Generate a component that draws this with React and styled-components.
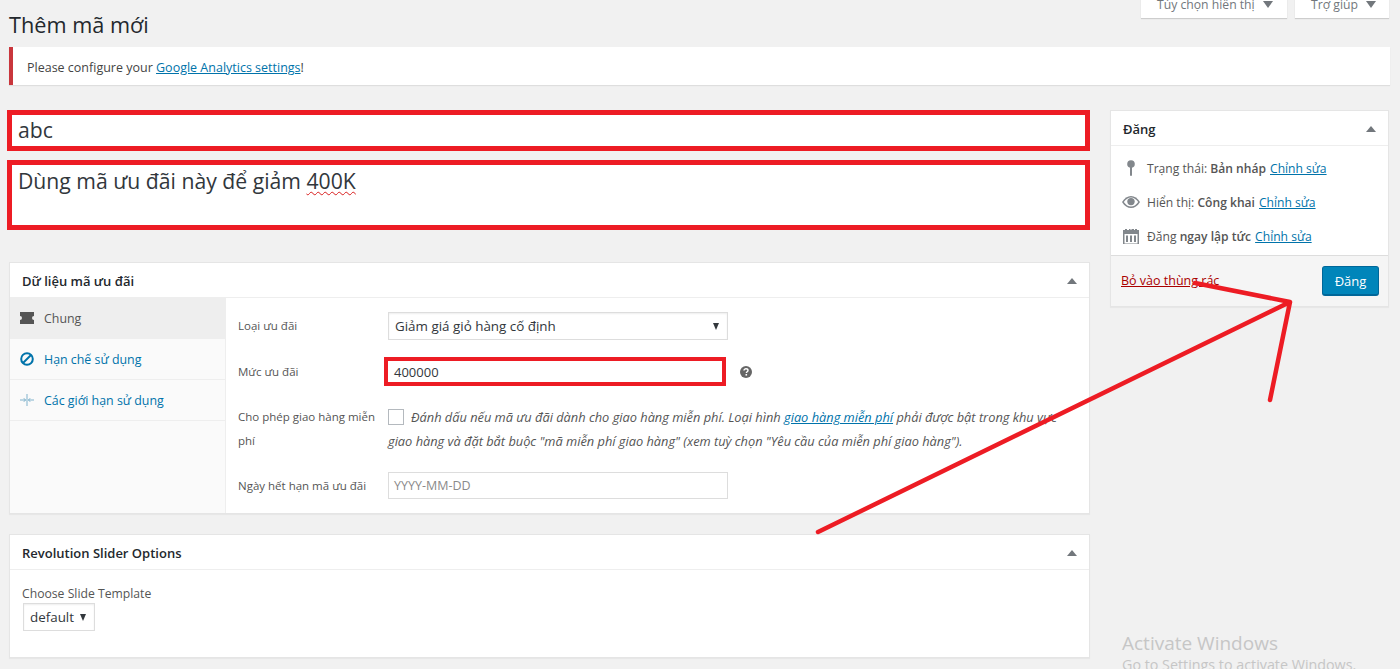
import React from 'react'
import styled, { createGlobalStyle } from 'styled-components'

const GlobalStyle = createGlobalStyle`
  html, body { margin: 0; padding: 0; height: 100%; background: #f1f1f1; }
  body { font-family: "Open Sans", "Liberation Sans", sans-serif; font-size: 13px; color: #444; }
  * { box-sizing: border-box; }
  a { color: #0073aa; }
`

const TriangleDown = () => (
  <svg width="10" height="7" viewBox="0 0 10 7"><path d="M0 0h10L5 7z" fill="#72777c" /></svg>
)

const TriangleUp = () => (
  <svg width="10" height="6" viewBox="0 0 10 6"><path d="M5 0l5 6H0z" fill="#72777c" /></svg>
)

const SelectArrow = () => (
  <svg width="6" height="7" viewBox="0 0 6 7"><path d="M0 0h6L3 7z" fill="#32373c" /></svg>
)

const PinIcon = () => (
  <svg width="14" height="16" viewBox="0 0 14 16">
    <circle cx="7" cy="4" r="3.800" fill="#82878c" />
    <rect x="6" y="6" width="2" height="10" rx="1" fill="#82878c" />
  </svg>
)

const EyeIcon = () => (
  <svg width="18" height="12" viewBox="0 0 18 12">
    <path d="M0 6C2.500 2 5.500 0 9 0s6.500 2 9 6c-2.500 4-5.500 6-9 6S2.500 10 0 6z" fill="#82878c" />
    <path d="M1.800 6C4 3 6.300 1.500 9 1.500S14 3 16.200 6C14 9 11.700 10.500 9 10.500S4 9 1.800 6z" fill="#fff" />
    <circle cx="9" cy="5.600" r="3.700" fill="#82878c" />
  </svg>
)

const CalendarIcon = () => (
  <svg width="16" height="16" viewBox="0 0 16 16" fill="#82878c">
    <path d="M0 2h2V1h2v1h2V1h1.500v1h1V1H11v1h1V1h2v1h2v15H0zM1.500 6v9.500h13V6z" />
    <path d="M3 7.500h2v6.500H3zM7 7.500h2v6.500H7zM11 7.500h2v6.500h-2z" />
  </svg>
)

const TicketIcon = () => (
  <svg width="14" height="12" viewBox="0 0 14 12">
    <path d="M0 0h14v4a2 2 0 0 0 0 4v4H0V8a2 2 0 0 0 0-4z" fill="#555" />
  </svg>
)

const BanIcon = () => (
  <svg width="14" height="14" viewBox="0 0 14 14" fill="none" stroke="#0073aa" strokeWidth="2">
    <circle cx="7" cy="7" r="5.800" />
    <path d="M3 11L11 3" />
  </svg>
)

const LimitIcon = () => (
  <svg width="14" height="14" viewBox="0 0 14 14" fill="none" stroke="#4a93b8" strokeWidth="0.700">
    <path d="M7 1v12M0 7h5.500M14 7H8.500M3.800 5.200L5.600 7 3.800 8.800M10.200 5.200L8.400 7l1.800 1.800" />
  </svg>
)

const HelpIcon = () => (
  <svg width="12" height="12" viewBox="0 0 12 12">
    <circle cx="6" cy="6" r="6" fill="#666" />
    <path d="M4 4.600C4 3.400 5 2.800 6 2.800s2 .6 2 1.700c0 1.300-1.600 1.300-1.600 2.500" fill="none" stroke="#fff" strokeWidth="1.400" />
    <rect x="5.500" y="8" width="1.600" height="1.600" fill="#fff" />
  </svg>
)

const Page = styled.div`
  position: relative;
  height: 669px;
  overflow: hidden;
  padding: 0 10px 0 9px;
`

const TopRow = styled.header`
  display: flex;
  justify-content: space-between;
  height: 47px;
`

const Title = styled.h1`
  margin: 10px 0 0;
  font-size: 21.700px;
  font-weight: 400;
  line-height: 30px;
  color: #23282d;
`

const MetaTabs = styled.div`
  display: flex;
  gap: 8px;
  margin: -10px 1px 0 0;
  height: 28px;
`

const MetaTab = styled.div`
  display: flex;
  align-items: center;
  gap: 8px;
  width: ${p => p.$width}px;
  padding-left: 16px;
  background: #fff;
  font-size: 12.200px;
  color: #72777c;
  box-shadow: 0 1px 1px rgba(0, 0, 0, 0.15);
`

const Notice = styled.div`
  height: 38px;
  display: flex;
  align-items: center;
  padding: 2px 0 0 14px;
  background: #fff;
  border-left: 4px solid #c9363c;
  box-shadow: 0 1px 1px rgba(0, 0, 0, 0.08);
  font-size: 12.500px;
`

const Columns = styled.div`
  display: flex;
  justify-content: space-between;
  align-items: flex-start;
  margin-top: 25px;
`

const MainColumn = styled.main`
  width: 1081px;
`

const TitleInput = styled.div`
  width: 1083px;
  height: 41px;
  margin-left: -2px;
  padding-left: 6px;
  border: 5px solid #ed1c24;
  background: #fff;
  font-size: 21.200px;
  line-height: 30px;
  color: #32373c;
`

const Description = styled(TitleInput)`
  height: 70px;
  margin-top: 9px;
  padding-top: 1px;
`

const Squiggle = styled.span`
  text-decoration: underline wavy #d81e1e 1px;
  text-underline-offset: 2px;
`

const Box = styled.section`
  background: #fff;
  border: 1px solid #e5e5e5;
  box-shadow: 0 1px 1px rgba(0, 0, 0, 0.04);
  margin-top: ${p => p.$top}px;
`

const BoxHeader = styled.div`
  display: flex;
  justify-content: space-between;
  align-items: center;
  height: 35px;
  padding: 1px 12px 0;
  border-bottom: 1px solid #eee;
  font-size: 13px;
  font-weight: 600;
  color: #23282d;
`

const DataBody = styled.div`
  display: flex;
  height: 215px;
`

const TabList = styled.nav`
  width: 216px;
  background: #fafafa;
  border-right: 1px solid #eee;
`

const Tab = styled.div`
  display: flex;
  align-items: center;
  gap: 10px;
  height: 41px;
  padding-left: 10px;
  font-size: 12.400px;
  color: ${p => (p.$active ? '#555' : '#0073aa')};
  background: ${p => (p.$active ? '#eee' : 'transparent')};
  border-bottom: 1px solid #eee;
`

const FormArea = styled.div`
  flex: 1;
  padding: 14px 12px 0 12px;
`

const FormRow = styled.div`
  display: grid;
  grid-template-columns: 150px 1fr;
  align-items: ${p => (p.$top ? 'start' : 'center')};
  margin-bottom: ${p => p.$gap}px;
`

const FieldLabel = styled.label`
  font-size: 11.500px;
  line-height: 24px;
  color: #555;
`

const SelectBox = styled.div`
  display: flex;
  justify-content: space-between;
  align-items: center;
  width: ${p => p.$width || 340}px;
  height: 28px;
  margin-left: ${p => p.$left || 0}px;
  padding: 0 8px 0 6px;
  background: #fff;
  border: 1px solid #ddd;
  box-shadow: inset 0 1px 2px rgba(0, 0, 0, 0.07);
  font-size: 13.400px;
  color: #32373c;
`

const AmountRow = styled.div`
  display: flex;
  align-items: center;
  gap: 14px;
  margin-left: -4px;
`

const AmountInput = styled.div`
  width: 342px;
  height: 29px;
  padding-left: 6px;
  border: 4px solid #ed1c24;
  background: #fff;
  font-size: 13px;
  line-height: 23px;
  color: #32373c;
`

const CheckText = styled.div`
  font-size: 12.800px;
  font-style: italic;
  line-height: 24px;
  color: #555;
`

const Checkbox = styled.span`
  display: inline-block;
  width: 16px;
  height: 16px;
  margin-right: 7px;
  vertical-align: -3px;
  background: #fff;
  border: 1px solid #b4b9be;
`

const DateInput = styled.div`
  width: 340px;
  height: 27px;
  padding-left: 5px;
  border: 1px solid #ddd;
  background: #fff;
  font-size: 12.500px;
  line-height: 25px;
  color: #8a8a8a;
`

const SliderBody = styled.div`
  height: 87px;
  padding: 15px 13px 0 12px;
`

const SliderLabel = styled.div`
  font-size: 12.200px;
  line-height: 18px;
  color: #555;
`

const SideColumn = styled.aside`
  width: 279px;
  margin-right: 1px;
  background: #fff;
  border: 1px solid #e5e5e5;
  box-shadow: 0 1px 1px rgba(0, 0, 0, 0.04);
`

const SideRows = styled.div`
  display: flex;
  flex-direction: column;
  gap: 10px;
  padding: 10px 0 7px 10px;
`

const SideRow = styled.div`
  display: flex;
  align-items: center;
  height: 24px;
  font-size: 12.100px;
  color: #555;
  b { font-weight: 600; }
  a { margin-left: 4px; }
`

const SideIcon = styled.span`
  display: flex;
  justify-content: center;
  width: 20px;
  margin-right: 6px;
`

const SideFooter = styled.div`
  display: flex;
  justify-content: space-between;
  align-items: center;
  height: 51px;
  padding: 0 9px 0 10px;
  background: #f5f5f5;
  border-top: 1px solid #ddd;
  a { color: #a00; font-size: 12.500px; margin-bottom: 2px; }
`

const PublishButton = styled.button`
  width: 57px;
  height: 30px;
  padding: 0;
  background: #0085ba;
  border: 1px solid #006799;
  border-bottom-width: 2px;
  border-radius: 3px;
  font-family: inherit;
  font-size: 13px;
  color: #fff;
`

const Annotations = styled.svg`
  position: absolute;
  inset: 0;
  pointer-events: none;
`

const Watermark = styled.div`
  position: absolute;
  left: 1122px;
  top: 631px;
  color: #c6c6c6;
  font-size: 19px;
  line-height: 24px;
  white-space: nowrap;
  small { display: block; font-size: 14.300px; line-height: 20px; }
`

const App = () => (
  <Page>
    <GlobalStyle />
    <TopRow>
      <Title>Thêm mã mới</Title>
      <MetaTabs>
        <MetaTab $width={146}>Tùy chọn hiển thị <TriangleDown /></MetaTab>
        <MetaTab $width={94}>Trợ giúp <TriangleDown /></MetaTab>
      </MetaTabs>
    </TopRow>

    <Notice>
      <span>Please configure your <a href="#">Google Analytics settings</a>!</span>
    </Notice>

    <Columns>
      <MainColumn>
        <TitleInput>abc</TitleInput>
        <Description>Dùng mã ưu đãi này để giảm <Squiggle>400K</Squiggle></Description>

        <Box $top={32}>
          <BoxHeader>Dữ liệu mã ưu đãi <TriangleUp /></BoxHeader>
          <DataBody>
            <TabList>
              <Tab $active><TicketIcon /> Chung</Tab>
              <Tab><BanIcon /> Hạn chế sử dụng</Tab>
              <Tab><LimitIcon /> Các giới hạn sử dụng</Tab>
            </TabList>
            <FormArea>
              <FormRow $gap={17}>
                <FieldLabel>Loại ưu đãi</FieldLabel>
                <SelectBox>Giảm giá giỏ hàng cố định <SelectArrow /></SelectBox>
              </FormRow>
              <FormRow $gap={19}>
                <FieldLabel>Mức ưu đãi</FieldLabel>
                <AmountRow>
                  <AmountInput>400000</AmountInput>
                  <HelpIcon />
                </AmountRow>
              </FormRow>
              <FormRow $top $gap={19}>
                <FieldLabel>Cho phép giao hàng miễn phí</FieldLabel>
                <CheckText>
                  <Checkbox />
                  Đánh dấu nếu mã ưu đãi dành cho giao hàng miễn phí. Loại hình <a href="#">giao hàng miễn phí</a> phải được bật trong khu vực giao hàng và đặt bắt buộc "mã miễn phí giao hàng" (xem tuỳ chọn "Yêu cầu của miễn phí giao hàng").
                </CheckText>
              </FormRow>
              <FormRow $gap={0}>
                <FieldLabel>Ngày hết hạn mã ưu đãi</FieldLabel>
                <DateInput>YYYY-MM-DD</DateInput>
              </FormRow>
            </FormArea>
          </DataBody>
        </Box>

        <Box $top={20}>
          <BoxHeader>Revolution Slider Options <TriangleUp /></BoxHeader>
          <SliderBody>
            <SliderLabel>Choose Slide Template</SliderLabel>
            <SelectBox $width={72} $left={1}>default <SelectArrow /></SelectBox>
          </SliderBody>
        </Box>
      </MainColumn>

      <SideColumn>
        <BoxHeader>Đăng <TriangleUp /></BoxHeader>
        <SideRows>
          <SideRow><SideIcon><PinIcon /></SideIcon>Trạng thái: <b>&nbsp;Bản nháp</b> <a href="#">Chỉnh sửa</a></SideRow>
          <SideRow><SideIcon><EyeIcon /></SideIcon>Hiển thị: <b>&nbsp;Công khai</b> <a href="#">Chỉnh sửa</a></SideRow>
          <SideRow><SideIcon><CalendarIcon /></SideIcon>Đăng <b>&nbsp;ngay lập tức</b> <a href="#">Chỉnh sửa</a></SideRow>
        </SideRows>
        <SideFooter>
          <a href="#">Bỏ vào thùng rác</a>
          <PublishButton>Đăng</PublishButton>
        </SideFooter>
      </SideColumn>
    </Columns>

    {/* red arrow drawn over the screenshot */}
    <Annotations width="1400" height="669" viewBox="0 0 1400 669" fill="none" stroke="#ed1c24" strokeWidth="4.500" strokeLinecap="round" strokeLinejoin="round">
      <path d="M818 532L1290 302L1195 283M1290 302L1270 400" />
    </Annotations>

    <Watermark>
      Activate Windows
      <small>Go to Settings to activate Windows.</small>
    </Watermark>
  </Page>
)

export default App
